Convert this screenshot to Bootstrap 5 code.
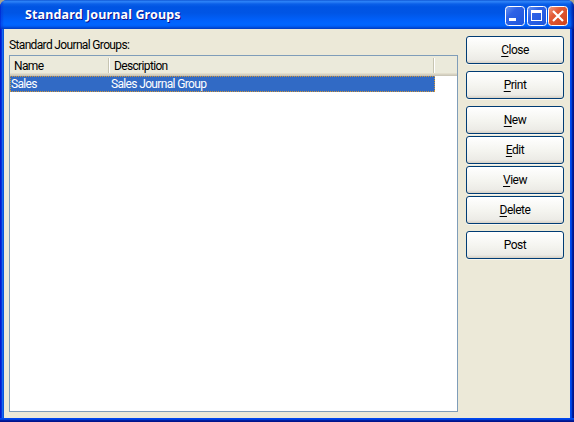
<!DOCTYPE html>
<html lang="en">
<head>
<meta charset="utf-8">
<title>Standard Journal Groups</title>
<link rel="stylesheet" href="https://cdn.jsdelivr.net/npm/bootstrap@5.3.0/dist/css/bootstrap.min.css">
<style>
body{font:400 12px/16px Roboto,"Liberation Sans",sans-serif;letter-spacing:-.65px;color:#000;background:#a7a38f;overflow:hidden}
.xp-window{width:574px;height:422px;border-radius:7px 7px 0 0;overflow:hidden;padding:0 4px 4px;
background:linear-gradient(#0048f0 0 1px,#0040dd 1px 2px,#001ea0 2px 3px,#00138c 3px) 0 418px/100% 4px no-repeat,
linear-gradient(90deg,#0019cf 0 1px,#0831d9 1px 2px,#166aee 2px 3px,#0855dd 3px 4px,#0048f0 4px 571px,#0040dd 571px 572px,#001ea0 572px 573px,#00138c 573px)}
.xp-title{height:29px;margin:0 -4px;padding:1px 6px 0 25px;background:linear-gradient(90deg,#0019cf99 0 1px,#0831d966 1px 2px,transparent 4px 570px,#001ea088 572px,#00138cdd 574px),linear-gradient(#0a48c8 0,#2a83f8 1px,#2a7df5 2px,#0a5fe8 4px,#0054e3 7px,#0055e5 13px,#0060fa 20px,#0066ff 24px,#0060f8 26px,#0046d0 28px,#003cc0 29px);color:#fff}
.xp-caption{font:bold 12.5px/16px "Noto Sans","Open Sans",sans-serif;letter-spacing:.14px;text-shadow:1px 1px #0f1089;white-space:nowrap}
.xp-controls{gap:1.5px;padding-top:2px}
.xp-tool{width:20px;height:20px;display:block}
.xp-client{height:389px;background:#ece9d8;padding:7px 6px 6px 5px}
.xp-label{height:19px;padding-top:1px}
.xp-list{width:449px;height:357px;border:1px solid #7f9db9;background:#fff}
.xp-head{height:20px;background:linear-gradient(#ebeadb 0 17px,#e2decd 17px 18px,#d6d2c2 18px 19px,#cbc7b8 19px);padding-top:2px}
.xp-head>div{height:15px;border-right:1px solid #fff;box-shadow:inset -1px 0 #c7c5b2;line-height:17px}
.c-name{width:100px;padding-left:4px}
.c-desc{width:325px;padding-left:4px}
.xp-row{--dots:#ce953a 0 1px,#316ac5 1px 2px;width:425px;height:16px;color:#fff;line-height:16px;
background:repeating-linear-gradient(90deg,var(--dots)) top/100% 1px no-repeat,repeating-linear-gradient(90deg,var(--dots)) bottom/100% 1px no-repeat,repeating-linear-gradient(var(--dots)) left/1px 100% no-repeat,repeating-linear-gradient(var(--dots)) right/1px 100% no-repeat,#316ac5}
.xp-row .c-name,.xp-row .c-desc{padding-left:1px}
.xp-actions{width:98px}
.xp-btn{height:28px;width:98px;padding:0;border:1px solid #003c74;border-radius:3px;background:linear-gradient(#fff,#f4f4ef 55%,#ecebe6 88%,#d6d0c5);box-shadow:0 1px #f8f6ef;font-size:12px;font-weight:400;line-height:26px;letter-spacing:-.5px;color:#000}
.xp-btn u{text-underline-offset:2px;text-decoration-thickness:1px}
.group-gap{margin-top:7px}
.item-gap{margin-top:2px}
</style>
<script src="https://cdn.jsdelivr.net/npm/bootstrap@5.3.0/dist/js/bootstrap.bundle.min.js"></script>
</head>
<body>
<main class="xp-window">
<header class="xp-title d-flex align-items-center justify-content-between">
<div class="xp-caption">Standard Journal Groups</div>
<div class="xp-controls d-flex">
<svg class="xp-tool" viewBox="0 0 20 20"><defs><linearGradient id="b" x2="1" y2="1"><stop stop-color="#6a96f2"/><stop offset=".35" stop-color="#2e62e6"/><stop offset="1" stop-color="#1d55dc"/></linearGradient><linearGradient id="r" x2="1" y2="1"><stop stop-color="#f0a088"/><stop offset=".35" stop-color="#e35a36"/><stop offset="1" stop-color="#d0421a"/></linearGradient></defs><rect x=".5" y=".5" width="19" height="19" rx="3" fill="url(#b)" stroke="#fff"/><path d="M4 12h7v3H4z" fill="#fff"/></svg>
<svg class="xp-tool" viewBox="0 0 20 20"><rect x=".5" y=".5" width="19" height="19" rx="3" fill="url(#b)" stroke="#fff"/><path d="M4 4h11v11H4zM5 7v7h9V7z" fill="#fff" fill-rule="evenodd"/></svg>
<svg class="xp-tool" viewBox="0 0 20 20"><rect x=".5" y=".5" width="19" height="19" rx="3" fill="url(#r)" stroke="#fff"/><path d="M5 5l10 10M15 5L5 15" stroke="#fff" stroke-width="2.2"/></svg>
</div>
</header>
<section class="xp-client d-flex justify-content-between">
<div>
<div class="xp-label">Standard Journal Groups:</div>
<div class="xp-list">
<div class="xp-head d-flex"><div class="c-name">Name</div><div class="c-desc">Description</div></div>
<div class="xp-row d-flex"><div class="c-name">Sales</div><div class="c-desc">Sales Journal Group</div></div>
</div>
</div>
<div class="xp-actions d-flex flex-column">
<button class="btn xp-btn"><u>C</u>lose</button>
<button class="btn xp-btn group-gap"><u>P</u>rint</button>
<button class="btn xp-btn group-gap"><u>N</u>ew</button>
<button class="btn xp-btn item-gap"><u>E</u>dit</button>
<button class="btn xp-btn item-gap"><u>V</u>iew</button>
<button class="btn xp-btn item-gap"><u>D</u>elete</button>
<button class="btn xp-btn group-gap">Post</button>
</div>
</section>
</main>
</body>
</html>
